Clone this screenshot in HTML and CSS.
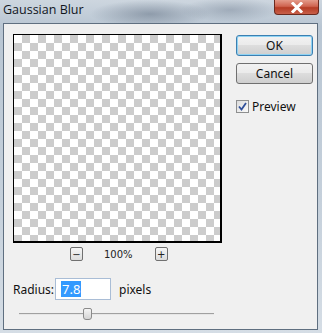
FILE: index.html
```html
<!DOCTYPE html>
<html lang="en">
<head>
    <meta charset="UTF-8">
    <title>Gaussian Blur</title>
    <link rel="stylesheet" href="styles.css">
</head>
<body>
    <div class="window">
        <div class="titlebar">
            <span class="title">Gaussian Blur</span>
            <button class="close-btn">
                <svg width="14" height="11" viewBox="0 0 14 11">
                    <path d="M3 1.5 L11 9.5 M11 1.5 L3 9.5" stroke="#fff" stroke-width="3" stroke-linecap="square"/>
                </svg>
            </button>
        </div>
        <div class="client">
            <div class="left">
                <div class="preview"></div>
                <div class="zoom-row">
                    <button class="zoom-btn">&minus;</button>
                    <span class="zoom-value">100%</span>
                    <button class="zoom-btn">+</button>
                </div>
                <div class="radius-row">
                    <label>Radius:</label>
                    <div class="radius-input"><span class="selected">7.8</span></div>
                    <span>pixels</span>
                </div>
                <div class="slider">
                    <div class="track"></div>
                    <div class="thumb"></div>
                </div>
            </div>
            <div class="right">
                <button class="btn btn-default">OK</button>
                <button class="btn">Cancel</button>
                <label class="check">
                    <span class="box">
                        <svg width="9" height="9" viewBox="0 0 9 9">
                            <path d="M1 4.5 L3.5 7.5 L8 1" fill="none" stroke="#2f4f9a" stroke-width="1.8"/>
                        </svg>
                    </span>
                    Preview
                </label>
            </div>
        </div>
    </div>
</body>
</html>
```

FILE: styles.css
```css
* {
    box-sizing: border-box;
    margin: 0;
    padding: 0;
}

body {
    width: 322px;
    height: 333px;
    overflow: hidden;
    font-family: "Noto Sans", "Open Sans", sans-serif;
    font-size: 12px;
    color: #111;
}

.window {
    width: 322px;
    height: 333px;
    padding: 0 4px 3px 3px;
    display: flex;
    flex-direction: column;
    background:
        radial-gradient(ellipse 60px 14px at 150px 14px, rgba(80, 95, 115, 0.45), transparent),
        radial-gradient(ellipse 50px 12px at 230px 10px, rgba(90, 105, 125, 0.35), transparent),
        linear-gradient(180deg, #cdd6df 0%, #b9c6d3 8%, #c5d0db 60%, #d5dde5 100%);
}

.titlebar {
    height: 23px;
    display: flex;
    align-items: flex-start;
    justify-content: space-between;
}

.title {
    font-family: "Open Sans", "Noto Sans", sans-serif;
    font-size: 12.5px;
    line-height: 20px;
    color: #10161d;
}

.close-btn {
    width: 45px;
    height: 15px;
    margin-right: -1px;
    border: 1px solid #6b2a1f;
    border-top: none;
    border-radius: 0 0 4px 4px;
    background: linear-gradient(180deg, #e49b8a 0%, #cf6450 45%, #b53c25 55%, #c8604a 100%);
    display: flex;
    align-items: center;
    justify-content: center;
}

.client {
    flex: 1;
    display: flex;
    border: 1px solid #5f6f80;
    background: #f0f0f0;
    padding: 10px 0 0 9px;
}

.left {
    width: 209px;
    display: flex;
    flex-direction: column;
}

.preview {
    width: 209px;
    height: 209px;
    border: 1px solid #000;
    border-right-width: 2px;
    border-bottom-width: 2px;
    background-color: #fff;
    background-image: conic-gradient(#cccccc 25%, #ffffff 0 50%, #cccccc 0 75%, #ffffff 0);
    background-size: 16px 16px;
}

.zoom-row {
    display: flex;
    align-items: center;
    margin: 4px 0 0 57px;
    height: 14px;
}

.zoom-btn {
    width: 13px;
    height: 14px;
    border: 1px solid #707070;
    border-radius: 2px;
    background: linear-gradient(180deg, #f6f6f6, #dcdcdc);
    font-family: "DejaVu Sans", sans-serif;
    font-size: 10px;
    line-height: 11px;
    color: #222;
}

.zoom-value {
    font-family: "DejaVu Sans", sans-serif;
    font-size: 10px;
    margin: 0 22px 0 21px;
    color: #222;
}

.radius-row {
    display: flex;
    align-items: center;
    margin-top: 17px;
    height: 22px;
}

.radius-row label {
    width: 42px;
}

.radius-input {
    width: 56px;
    height: 22px;
    border: 1px solid #a9bdd6;
    background: #fff;
    padding: 2px 0 0 5px;
    margin-right: 8px;
}

.selected {
    display: inline-block;
    background: #3399ff;
    color: #fff;
    font-size: 13px;
    line-height: 16px;
    padding: 0 1px;
}

.slider {
    position: relative;
    height: 12px;
    margin: 8px 0 0 6px;
    width: 195px;
}

.track {
    margin-top: 5px;
    height: 2px;
    border-top: 1px solid #a0a0a0;
    border-bottom: 1px solid #e6e6e6;
}

.thumb {
    position: absolute;
    left: 64px;
    top: 0;
    width: 9px;
    height: 12px;
    border: 1px solid #8a8a8a;
    border-radius: 2px 2px 3px 3px;
    background: linear-gradient(180deg, #f4f4f4, #d4d4d4);
}

.right {
    display: flex;
    flex-direction: column;
    margin-left: 14px;
    padding-top: 1px;
}

.btn {
    width: 77px;
    height: 21px;
    border: 1px solid #707070;
    border-radius: 3px;
    background: linear-gradient(180deg, #f2f2f2 0%, #ebebeb 45%, #dddddd 50%, #cfcfcf 100%);
    font-family: "Noto Sans", sans-serif;
    font-size: 12px;
    color: #111;
    margin-bottom: 7px;
}

.btn-default {
    border-color: #3c7fb1;
    box-shadow: inset 0 0 0 1px #8fd3f3;
}

.check {
    display: flex;
    align-items: center;
    margin-top: 7px;
    gap: 3px;
}

.box {
    width: 13px;
    height: 13px;
    border: 1px solid #8e8f8f;
    background: linear-gradient(135deg, #dcdcdc, #fafafa);
    display: flex;
    align-items: center;
    justify-content: center;
}
```
